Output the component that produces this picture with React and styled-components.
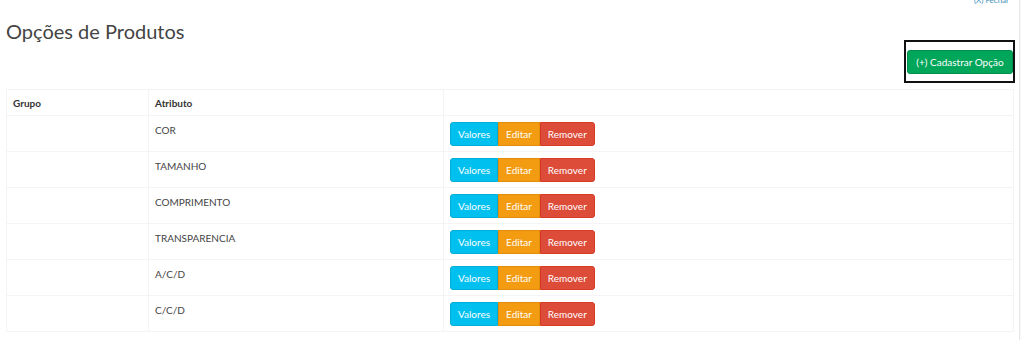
import React from 'react';
import styled, { createGlobalStyle } from 'styled-components';

const GlobalStyle = createGlobalStyle`
  body {
    margin: 0;
    background: #fff;
    font-family: Lato, "Liberation Sans", sans-serif;
    color: #333;
  }
`;

const Box = styled.div`
  width: 1008px;
  padding: 0 5px 8px 6px;
  border-right: 1px solid #e6e6e6;
  box-shadow: 0 1px 2px rgba(0, 0, 0, 0.08);
  background: #fff;
`;

const TopBar = styled.div`
  display: flex;
  justify-content: flex-end;
  height: 8px;
  margin-top: -5px;
  padding-right: 5px;

  a {
    font-size: 8px;
    line-height: 10px;
    color: #3c8dbc;
    text-decoration: none;
  }
`;

const Title = styled.h1`
  margin: 17px 0 0;
  height: 20px;
  font-size: 20px;
  font-weight: 400;
  line-height: 22px;
  color: #444;
  white-space: nowrap;
`;

const Toolbar = styled.div`
  display: flex;
  justify-content: flex-end;
  margin-right: -1px;
`;

const Outline = styled.div`
  border: 2px solid #111;
  padding: 8px 0 7px 1px;
`;

const PrimaryButton = styled.button`
  display: block;
  font-family: inherit;
  font-size: 10px;
  height: 24px;
  width: 106px;
  padding: 0;
  white-space: nowrap;
  border: 1px solid #008d4c;
  border-radius: 3px;
  background: #00a65a;
  color: #fff;
`;

const Table = styled.table`
  width: 100%;
  margin-top: 6px;
  border-collapse: collapse;
  border: 1px solid #f4f4f4;
  font-size: 10px;
  line-height: 12px;

  th, td {
    box-sizing: border-box;
    border: 1px solid #f4f4f4;
    text-align: left;
    vertical-align: top;
    padding: 0 6px;
  }

  th {
    height: 26px;
    vertical-align: middle;
    font-weight: 700;
  }

  td {
    height: 36px;
  }
`;

const TextCell = styled.td`
  && {
    padding-top: 8px;
  }
  color: #444;
  text-transform: uppercase;
`;

const ActionCell = styled.td`
  && {
    padding-top: 6px;
  }
`;

const Group = styled.div`
  display: flex;
`;

const palette = {
  info: ['#00c0ef', '#00acd6'],
  warning: ['#f39c12', '#e08e0b'],
  danger: ['#dd4b39', '#d73925'],
};

const ActionButton = styled.button`
  display: block;
  font-family: inherit;
  font-size: 10px;
  height: 24px;
  padding: 0 7px;
  color: #fff;
  background: ${(p) => palette[p.$kind][0]};
  border: 1px solid ${(p) => palette[p.$kind][1]};
  border-radius: 0;

  &:first-child {
    border-radius: 3px 0 0 3px;
  }
  &:last-child {
    border-radius: 0 3px 3px 0;
  }
`;

const rows = ['COR', 'TAMANHO', 'COMPRIMENTO', 'TRANSPARENCIA', 'A/C/D', 'C/C/D'];

export default function App() {
  return (
    <>
      <GlobalStyle />
      <Box>
        <TopBar>
          <a href="#">(X) Fechar</a>
        </TopBar>
        <Title>Opções de Produtos</Title>
        <Toolbar>
          <Outline>
            <PrimaryButton>(+) Cadastrar Opção</PrimaryButton>
          </Outline>
        </Toolbar>
        <Table>
          <colgroup>
            <col style={{ width: 142 }} />
            <col style={{ width: 295 }} />
            <col />
          </colgroup>
          <thead>
            <tr>
              <th>Grupo</th>
              <th>Atributo</th>
              <th></th>
            </tr>
          </thead>
          <tbody>
            {rows.map((name) => (
              <tr key={name}>
                <td></td>
                <TextCell>{name}</TextCell>
                <ActionCell>
                  <Group>
                    <ActionButton $kind="info">Valores</ActionButton>
                    <ActionButton $kind="warning">Editar</ActionButton>
                    <ActionButton $kind="danger">Remover</ActionButton>
                  </Group>
                </ActionCell>
              </tr>
            ))}
          </tbody>
        </Table>
      </Box>
    </>
  );
}
